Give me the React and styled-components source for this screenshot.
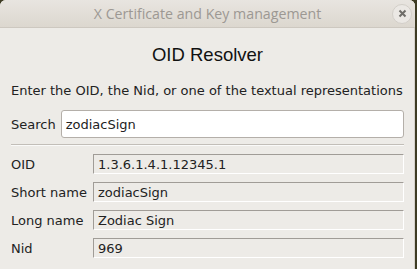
import React from 'react';
import styled, { createGlobalStyle } from 'styled-components';

const GlobalStyle = createGlobalStyle`
    html, body {
        margin: 0;
        padding: 0;
        background: #3e3c24;
    }
    body {
        font-family: "DejaVu Sans", "Liberation Sans", sans-serif;
    }
`

const Desktop = styled.div`
    display: flex;
    width: 417px;
    height: 269px;
    overflow: hidden;
`

const Window = styled.div`
    width: 415px;
    height: 269px;
    display: flex;
    flex-direction: column;
    background: #edebe7;
    border-radius: 6px 6px 0 0;
    overflow: hidden;
    box-shadow: inset -1px 0 0 #d6d2cc;
`

const TitleBar = styled.div`
    height: 28px;
    flex: none;
    display: grid;
    grid-template-columns: 1fr auto 1fr;
    align-items: center;
    background: linear-gradient(#e8e5e0, #dcd7cf);
    border-bottom: 1px solid #cdc8c0;
    box-sizing: border-box;
`

const Title = styled.div`
    grid-column: 2;
    font-family: "Open Sans", "DejaVu Sans", sans-serif;
    font-size: 14.2px;
    color: #9c9893;
`

const CloseButton = styled.div`
    justify-self: end;
    margin-right: 3px;
    width: 18px;
    height: 18px;
    border-radius: 50%;
    border: 1px solid #d2cec8;
    background: #ebe8e4;
    display: flex;
    align-items: center;
    justify-content: center;
`

const Content = styled.div`
    padding: 0 11px;
    display: flex;
    flex-direction: column;
`

const Heading = styled.div`
    text-align: center;
    font-family: "Liberation Sans", sans-serif;
    font-size: 18.5px;
    color: #111;
    margin-top: 16px;
    height: 22px;
    line-height: 22px;
`

const Intro = styled.div`
    margin-top: 17px;
    font-size: 13px;
    color: #222;
    white-space: nowrap;
    line-height: 16px;
`

const SearchRow = styled.div`
    display: flex;
    align-items: center;
    gap: 5px;
    margin-top: 11px;
`

const Label = styled.span`
    font-size: 13px;
    color: #222;
    width: ${p => p.width || 'auto'};
    flex: none;
`

const SearchInput = styled.div`
    flex: 1;
    height: 28px;
    box-sizing: border-box;
    background: #fff;
    border: 1px solid #b4afa9;
    border-radius: 3px;
    padding: 0 4px;
    display: flex;
    align-items: center;
    font-size: 13px;
    color: #222;
`

const Separator = styled.div`
    height: 1px;
    background: #c2beb8;
    margin: 6px 0 8px 0;
    border-bottom: 1px solid #fafaf9;
`

const Rows = styled.div`
    display: flex;
    flex-direction: column;
    gap: 8px;
`

const Row = styled.div`
    display: flex;
    align-items: center;
`

const Field = styled.div`
    flex: 1;
    height: 20px;
    box-sizing: border-box;
    border-top: 1px solid #a09c97;
    border-left: 1px solid #a09c97;
    border-right: 1px solid #fff;
    border-bottom: 1px solid #fff;
    padding: 0 4px;
    display: flex;
    align-items: center;
    font-size: 13px;
    color: #222;
`

const results = [
    { label: 'OID', value: '1.3.6.1.4.1.12345.1' },
    { label: 'Short name', value: 'zodiacSign' },
    { label: 'Long name', value: 'Zodiac Sign' },
    { label: 'Nid', value: '969' },
]

export default function App() {
    return (
        <>
            <GlobalStyle />
            <Desktop>
                <Window>
                    <TitleBar>
                        <Title>X Certificate and Key management</Title>
                        <CloseButton>
                            <svg width="9" height="9" viewBox="0 0 9 9">
                                <path d="M1.5 1.5 L7.5 7.5 M7.5 1.5 L1.5 7.5" stroke="#6f6d69" strokeWidth="2" />
                            </svg>
                        </CloseButton>
                    </TitleBar>
                    <Content>
                        <Heading>OID Resolver</Heading>
                        <Intro>Enter the OID, the Nid, or one of the textual representations</Intro>
                        <SearchRow>
                            <Label>Search</Label>
                            <SearchInput>zodiacSign</SearchInput>
                        </SearchRow>
                        <Separator />
                        <Rows>
                            {results.map(r => (
                                <Row key={r.label}>
                                    <Label width="82px">{r.label}</Label>
                                    <Field>{r.value}</Field>
                                </Row>
                            ))}
                        </Rows>
                    </Content>
                </Window>
            </Desktop>
        </>
    )
}
